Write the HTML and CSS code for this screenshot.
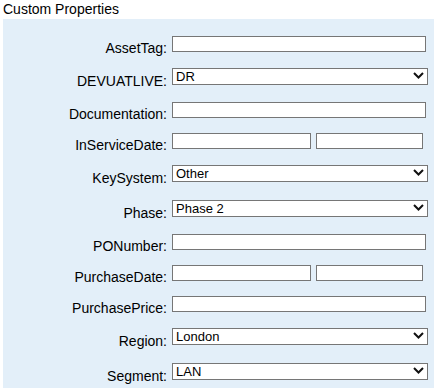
FILE: index.html
```html
<!DOCTYPE html>
<html>
<head>
<meta charset="utf-8">
<link rel="stylesheet" href="styles.css">
</head>
<body>
<div class="title">Custom Properties</div>
<div class="panel">
  <div class="row trow"><label class="lbl">AssetTag:</label><input class="txt" type="text"></div>
  <div class="row srow"><label class="lbl">DEVUATLIVE:</label><div class="sel"><select><option>DR</option></select><svg class="chev" width="11" height="7" viewBox="0 0 11 7"><path d="M1 1 L5.5 5.5 L10 1" fill="none" stroke="#111" stroke-width="2"/></svg></div></div>
  <div class="row trow"><label class="lbl">Documentation:</label><input class="txt" type="text"></div>
  <div class="row trow"><label class="lbl">InServiceDate:</label><div class="pair"><input class="d1" type="text"><input class="d2" type="text"></div></div>
  <div class="row srow"><label class="lbl">KeySystem:</label><div class="sel"><select><option>Other</option></select><svg class="chev" width="11" height="7" viewBox="0 0 11 7"><path d="M1 1 L5.5 5.5 L10 1" fill="none" stroke="#111" stroke-width="2"/></svg></div></div>
  <div class="row srow"><label class="lbl">Phase:</label><div class="sel"><select><option>Phase 2</option></select><svg class="chev" width="11" height="7" viewBox="0 0 11 7"><path d="M1 1 L5.5 5.5 L10 1" fill="none" stroke="#111" stroke-width="2"/></svg></div></div>
  <div class="row trow"><label class="lbl">PONumber:</label><input class="txt" type="text"></div>
  <div class="row trow"><label class="lbl">PurchaseDate:</label><div class="pair"><input class="d1" type="text"><input class="d2" type="text"></div></div>
  <div class="row trow"><label class="lbl">PurchasePrice:</label><input class="txt" type="text"></div>
  <div class="row srow"><label class="lbl">Region:</label><div class="sel"><select><option>London</option></select><svg class="chev" width="11" height="7" viewBox="0 0 11 7"><path d="M1 1 L5.5 5.5 L10 1" fill="none" stroke="#111" stroke-width="2"/></svg></div></div>
  <div class="row srow"><label class="lbl">Segment:</label><div class="sel"><select><option>LAN</option></select><svg class="chev" width="11" height="7" viewBox="0 0 11 7"><path d="M1 1 L5.5 5.5 L10 1" fill="none" stroke="#111" stroke-width="2"/></svg></div></div>
</div>
</body>
</html>
```

FILE: styles.css
```css
html, body {
  margin: 0;
  padding: 0;
  background: #ffffff;
  font-family: "Liberation Sans", Arial, sans-serif;
  color: #000;
}
.title {
  font-size: 14px;
  line-height: 16px;
  padding: 1px 0 0 3px;
  height: 18px;
}
.panel {
  margin-left: 3px;
  background: #e3eff9;
  padding-top: 17px;
  height: 352px;
  overflow: hidden;
}
.row {
  display: flex;
  align-items: flex-start;
}
.trow { height: 31px; }
.srow { height: 35px; }
.lbl {
  box-sizing: border-box;
  width: 169px;
  text-align: right;
  font-size: 14px;
  line-height: 16px;
  padding-top: 4px;
  padding-right: 5px;
}
.srow .lbl { padding-top: 6px; }
input {
  box-sizing: border-box;
  height: 16px;
  border: 1px solid #767676;
  border-radius: 0;
  background: #fff;
  margin: 0;
  padding: 0 3px;
  font: 13px "Liberation Sans", Arial, sans-serif;
  outline: none;
}
.txt { width: 254px; }
.pair { display: flex; gap: 5px; }
.d1 { width: 139px; }
.d2 { width: 107px; }
.sel {
  position: relative;
  width: 256px;
  height: 17px;
}
select {
  -webkit-appearance: none;
  appearance: none;
  box-sizing: border-box;
  width: 256px;
  height: 17px;
  border: 1px solid #767676;
  border-radius: 0;
  background: #fff;
  margin: 0;
  padding: 0 0 0 3px;
  font: 13px "Liberation Sans", Arial, sans-serif;
  line-height: 15px;
  color: #000;
  outline: none;
}
.chev {
  position: absolute;
  right: 4px;
  top: 5px;
  pointer-events: none;
}
```
